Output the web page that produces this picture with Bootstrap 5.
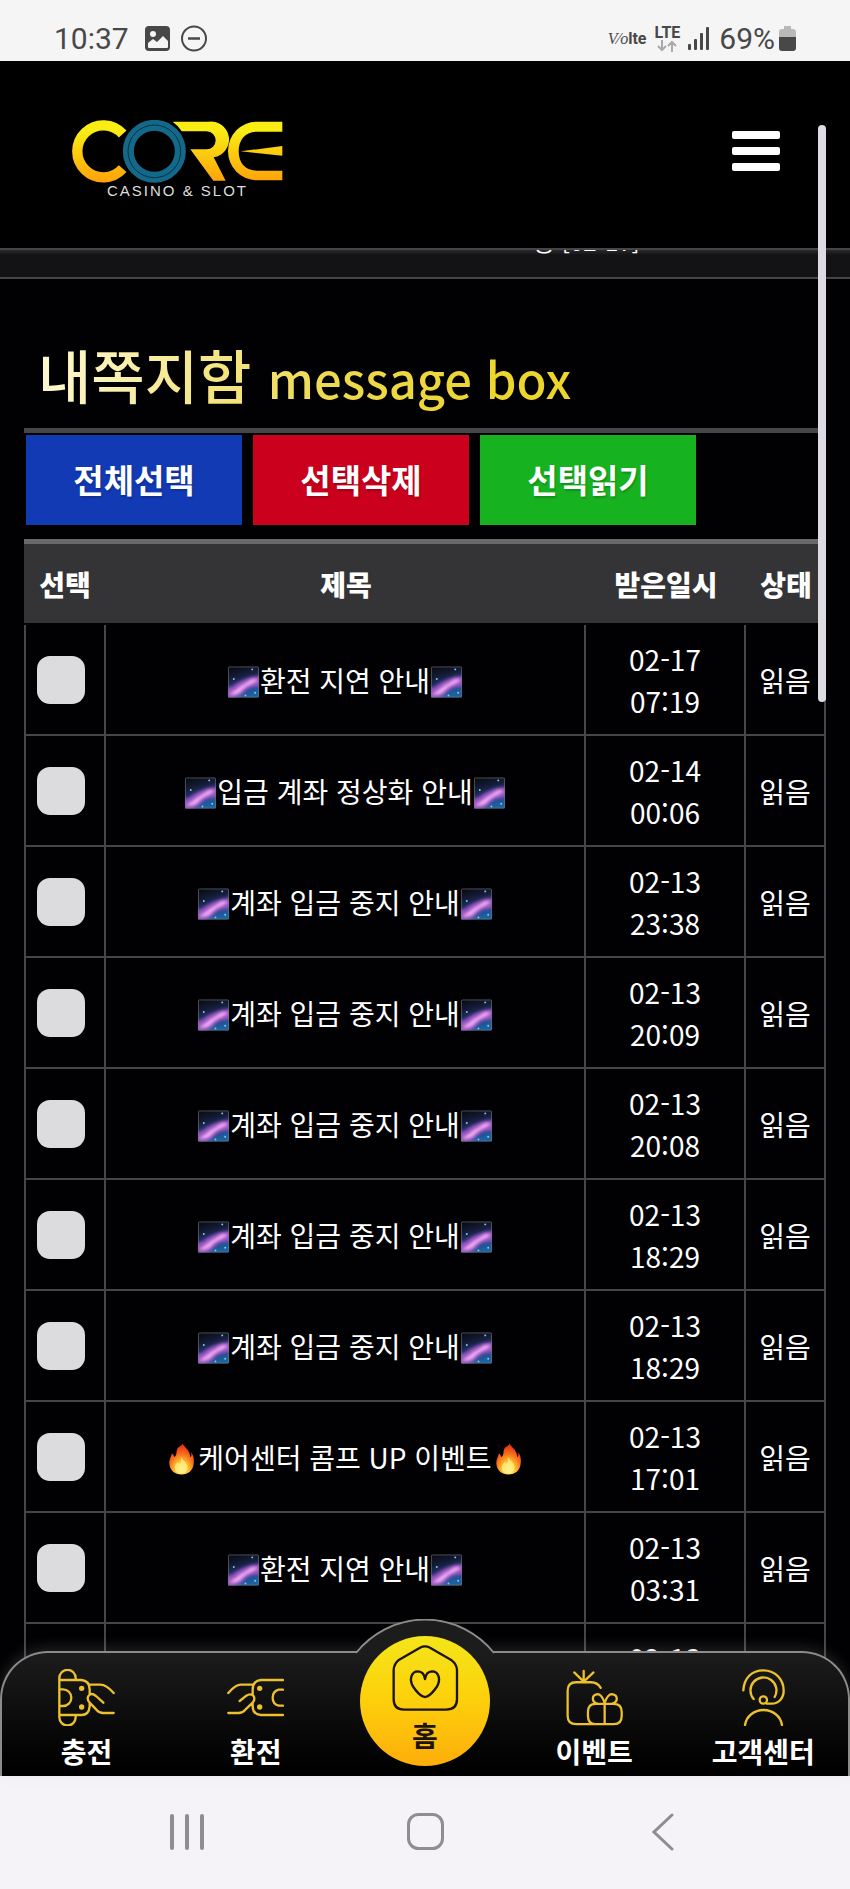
<!DOCTYPE html>
<html lang="ko">
<head>
<meta charset="utf-8">
<meta name="viewport" content="width=device-width, initial-scale=1">
<title>내쪽지함</title>
<link href="https://cdn.jsdelivr.net/npm/bootstrap@5.3.0/dist/css/bootstrap.min.css" rel="stylesheet">
<style>
  :root { --line: #464648; --ink: #010104; }
  body { background: var(--ink); color: #fff; font-family: "Noto Sans CJK KR", sans-serif; font-size: 28px; line-height: 42px; }
  .shell { height: 100vh; }
  .statusbar { height: 61px; padding: 16px 54px 0 54px; background: #f5f5f5; color: #484848; font-family: Roboto, sans-serif; font-size: 30px; line-height: 44px; }
  .net-type { font-size: 16px; line-height: 14px; }
  .volte { font-size: 16px; line-height: 20px; }
  .volte i { font-family: "Liberation Serif", serif; }
  .topbar { height: 189px; padding: 2px 70px 0 72px; background: #000; border-bottom: 2px solid var(--line); }
  .brand-logo { width: 211px; padding-top: 8px; }
  .tagline { font-family: "Liberation Sans", sans-serif; font-size: 15px; line-height: 16px; letter-spacing: 2px; color: #ddd; }
  .menu-btn { width: 48px; padding-bottom: 10px !important; }
  .menu-btn span { height: 8px; border-radius: 2px; background: #fff; }
  .ticker { height: 29px; background: linear-gradient(#2a2a2d, #131316 5px); border-bottom: 2px solid var(--line); font-size: 24px; line-height: 24px; padding-left: 533px; }
  .ticker p { margin-top: -21px; }
  .content-pad { padding: 0 24px; }
  .page-title { height: 154px; padding: 44px 14px 0; border-bottom: 5px solid var(--line); }
  .page-title h1 { font-size: 58px; line-height: 80px; font-weight: 500; background: linear-gradient(100deg, #fff9d4, #eed950 38%, #ecd52c 60%, #ecd52c); -webkit-background-clip: text; background-clip: text; color: transparent; }
  .page-title small { font-size: 49px; font-weight: 500; }
  .actions { padding: 2px; gap: 11px; margin-bottom: 12px; }
  .act { width: 216px; height: 90px; border: 0; border-radius: 0; color: #fff; font-size: 33px; font-weight: 700; text-shadow: 1px 2px 2px rgba(0,0,0,.2); }
  .act-all { background: #133ab5; }
  .act-del { background: #cb001d; }
  .act-read { background: #17b21f; }
  .inbox { --bs-table-bg: transparent; --bs-table-color: #fff; table-layout: fixed; border-collapse: separate; border-spacing: 0; color: #fff; }
  .inbox > thead > tr > th { height: 86px; padding: 0; vertical-align: middle; background: #343436; border-top: 5px solid #69696b; border-bottom: 2px solid #000; font-weight: 900; }
  .inbox > tbody > tr > td { height: 111px; padding: 0; border: 0 solid var(--line); border-width: 0 2px 2px 0; }
  .inbox > tbody > tr > td:first-child { border-left-width: 2px; }
  .c-pick { width: 82px; } .c-date { width: 160px; } .c-state { width: 80px; }
  .form-check-input.pick { width: 48px; height: 48px; margin: 0 8px 0 0; border: 0; border-radius: 13px; background-color: #dcdcdf; vertical-align: middle; }
  .emo { width: 33px; height: 34px; vertical-align: -7px; }
  .inbox a { color: #fff; text-decoration: none; }
  .thumb { right: 24px; top: 125px; width: 8px; height: 577px; border-radius: 4px; background: #dedce2; z-index: 5; }
  .dock { z-index: 6; }
  .tabs { height: 125px; border: 2px solid #8b8b89; border-bottom: 0; border-radius: 48px 48px 0 0; background: linear-gradient(#1c1c1d, #050505 75%, #000); box-shadow: 0 -4px 14px rgba(150,150,150,.22); }
  .tabs > a, .tabs > .gap-slot { flex: 0 0 20%; }
  .tabs a { color: #fff; text-decoration: none; font-weight: 700; line-height: 40px; padding-top: 16px; }
  .tabs > a > svg { width: 57px; height: 57px; margin-bottom: 5px; }
  .g-line { fill: none; stroke: #ecc02e; stroke-width: 7; stroke-linecap: round; stroke-linejoin: round; }
  .g-dot { fill: #ecc02e; stroke: none; }
  .bump { width: 142px; height: 36px; top: -34px; left: 50%; margin-left: -71px; }
  .tabs .home { width: 130px; height: 130px; left: 50%; margin-left: -65px; top: -17px; padding: 7px 0 0; border-radius: 50%; background: linear-gradient(#f3e61a, #fdd20c 45%, #fdae0a); color: #1c1408; line-height: 36px; }
  .tabs .home svg { width: 70px; height: 70px; }
  .sysbar { height: 113px; padding-bottom: 2px; background: #f5f3f7; }
  .sysbar button { width: 28%; }
</style>
</head>
<body>
<svg width="0" height="0" class="position-absolute" aria-hidden="true">
  <defs>
    <linearGradient id="sky" x1="0" y1="0" x2="0.3" y2="1"><stop offset="0" stop-color="#07080b"/><stop offset=".35" stop-color="#131a33"/><stop offset=".7" stop-color="#263a7c"/><stop offset="1" stop-color="#1b62a0"/></linearGradient>
    <radialGradient id="flame" cx=".5" cy=".85" r=".85"><stop offset="0" stop-color="#fff6a0"/><stop offset=".3" stop-color="#ffc62e"/><stop offset=".6" stop-color="#f9701d"/><stop offset="1" stop-color="#e02412"/></radialGradient>
    <filter id="soft"><feGaussianBlur stdDeviation="1.6"/></filter>
    <clipPath id="tile"><rect x="1" y="1" width="32" height="32" rx="1"/></clipPath>
    <symbol id="galaxy" viewBox="0 0 34 34">
      <g clip-path="url(#tile)">
        <rect width="34" height="34" fill="url(#sky)"/>
        <path d="M-3 23Q4 24 9 19Q14 16 19 14Q27 10 37 11V20Q30 22 24 23Q19 25 16 29Q10 35-3 37Z" fill="#9a52c2" filter="url(#soft)"/>
        <path d="M2 30Q9 25 14 21Q20 18 24 15Q28 13 32 15Q27 19 21 21Q16 24 13 28Q8 31 2 30Z" fill="#f0aef2" filter="url(#soft)"/>
        <g fill="#8fc4ee"><circle cx="7" cy="14" r="1"/><circle cx="29" cy="28" r="1"/><circle cx="19" cy="31" r="1"/><circle cx="26" cy="4" r="1"/></g>
      </g>
      <rect x="1.500" y="1.500" width="31" height="31" rx="1" fill="none" stroke="#777" stroke-opacity=".6"/>
    </symbol>
    <symbol id="fire" viewBox="0 0 34 34">
      <path d="M18 1C20 5 26 8 26 15C28 14 27 11 27 10C30 14 30 18 29.500 22C29 29 24 33 17 33C10 33 5 29 4.500 22C4 17 7 14 7 11C9 12 9 14 9.500 15C13 13 11 9 13 6C14 4 17 4 18 1Z" fill="url(#flame)"/>
      <path d="M17 15C18 19 23 20 23 26C23 30 20 32 17 32C13 32 10 30 10 26C10 23 12 22 13 20C14 21 14 22 15 22C17 20 16 17 17 15Z" fill="#fff08a" fill-opacity=".75"/>
    </symbol>
  </defs>
</svg>

<div class="shell position-relative d-flex flex-column overflow-hidden">
  <div class="statusbar d-flex align-items-center justify-content-between flex-shrink-0">
    <div class="d-flex align-items-center">
      <span>10:37</span>
      <svg class="ms-3" width="25" height="25" viewBox="0 0 25 25"><rect width="25" height="25" rx="4" fill="#484848"/><circle cx="8" cy="8" r="3" fill="#f5f5f5"/><path d="M3 17l5-4 4 3 6-6 5 5v6q0 1-1 1H4q-1 0-1-1z" fill="#f5f5f5"/></svg>
      <svg class="ms-2" width="34" height="27" viewBox="0 0 34 27" fill="none" stroke="#484848" stroke-width="2"><circle cx="16" cy="13.500" r="12"/><path d="M10 13.500h12" stroke-width="2.500"/></svg>
    </div>
    <div class="d-flex align-items-center">
      <span class="volte me-2"><i>V⁄o</i><b>lte</b></span>
      <span class="net-type fw-bold d-flex flex-column align-items-center me-2">LTE
        <svg width="20" height="12" viewBox="0 0 20 12" fill="none" stroke="#aaa" stroke-width="2"><path d="M5 0v10M1 6l4 4 4-4M15 12V2M11 6l4-4 4 4"/></svg></span>
      <svg class="me-2" width="23" height="24" viewBox="0 0 23 24" fill="#484848"><rect x="0" y="17" width="3" height="6" rx="1"/><rect x="6" y="12" width="3" height="11" rx="1"/><rect x="12" y="6" width="3" height="17" rx="1"/><rect x="18" y="0" width="3" height="23" rx="1"/></svg>
      <span class="me-1">69%</span>
      <svg width="17" height="25" viewBox="0 0 17 25"><path d="M5 0h7v3h2q3 0 3 3v6H0V6q0-3 3-3h2z" fill="#b9b9b9"/><path d="M0 11h17v11q0 3-3 3H3q-3 0-3-3z" fill="#484848"/></svg>
    </div>
  </div>

  <header class="topbar d-flex align-items-center justify-content-between flex-shrink-0">
    <a href="#" class="brand-logo text-decoration-none d-block text-center" aria-label="CORE CASINO &amp; SLOT">
      <svg class="d-block" width="211" height="63" viewBox="216 362 633 189">
        <defs><linearGradient id="gold" gradientUnits="userSpaceOnUse" x1="0" y1="365" x2="0" y2="548"><stop offset=".15" stop-color="#f9ed14"/><stop offset="1" stop-color="#ffa20a"/></linearGradient></defs>
        <path d="M368 404A78 78 0 1 0 368 508" fill="none" stroke="url(#gold)" stroke-width="31"/>
        <circle cx="463" cy="456" r="78" fill="#000" stroke="#13698a" stroke-width="33"/>
        <circle cx="463" cy="456" r="79" fill="none" stroke="#04303f" stroke-width="3"/>
        <path d="M518 367H625A54 54 0 0 1 641 474L677 544H640L571 450H620A27 27 0 0 0 620 396H545Q534 378 518 367Z" fill="url(#gold)"/>
        <path d="M847 367H770A86 88 0 0 0 770 543H847V514H770C735 514 716 490 716 456S735 397 770 397H847Z" fill="url(#gold)"/>
        <path d="M722 456L847 440V469Z" fill="url(#gold)"/>
      </svg>
      <span class="tagline d-block">CASINO &amp; SLOT</span>
    </a>
    <button class="menu-btn btn p-0 border-0 d-flex flex-column gap-2" type="button" aria-label="메뉴"><span class="w-100"></span><span class="w-100"></span><span class="w-100"></span></button>
  </header>

  <div class="ticker overflow-hidden flex-shrink-0"><p>중 [02-17]</p></div>

  <main class="content-pad">
    <div class="page-title d-flex align-items-center"><h1 class="mb-0 w-100">내쪽지함 <small>message box</small></h1></div>
    <div class="actions d-flex">
      <button type="button" class="btn act act-all">전체선택</button>
      <button type="button" class="btn act act-del">선택삭제</button>
      <button type="button" class="btn act act-read">선택읽기</button>
    </div>
    <table class="table inbox align-middle text-center mb-0">
      <thead><tr><th class="c-pick">선택</th><th>제목</th><th class="c-date">받은일시</th><th class="c-state">상태</th></tr></thead>
      <tbody>
        <tr><td><input class="form-check-input pick" type="checkbox" aria-label="쪽지 선택"></td><td><a href="#"><svg class="emo"><use href="#galaxy"/></svg>환전 지연 안내<svg class="emo"><use href="#galaxy"/></svg></a></td><td>02-17<br>07:19</td><td>읽음</td></tr>
        <tr><td><input class="form-check-input pick" type="checkbox" aria-label="쪽지 선택"></td><td><a href="#"><svg class="emo"><use href="#galaxy"/></svg>입금 계좌 정상화 안내<svg class="emo"><use href="#galaxy"/></svg></a></td><td>02-14<br>00:06</td><td>읽음</td></tr>
        <tr><td><input class="form-check-input pick" type="checkbox" aria-label="쪽지 선택"></td><td><a href="#"><svg class="emo"><use href="#galaxy"/></svg>계좌 입금 중지 안내<svg class="emo"><use href="#galaxy"/></svg></a></td><td>02-13<br>23:38</td><td>읽음</td></tr>
        <tr><td><input class="form-check-input pick" type="checkbox" aria-label="쪽지 선택"></td><td><a href="#"><svg class="emo"><use href="#galaxy"/></svg>계좌 입금 중지 안내<svg class="emo"><use href="#galaxy"/></svg></a></td><td>02-13<br>20:09</td><td>읽음</td></tr>
        <tr><td><input class="form-check-input pick" type="checkbox" aria-label="쪽지 선택"></td><td><a href="#"><svg class="emo"><use href="#galaxy"/></svg>계좌 입금 중지 안내<svg class="emo"><use href="#galaxy"/></svg></a></td><td>02-13<br>20:08</td><td>읽음</td></tr>
        <tr><td><input class="form-check-input pick" type="checkbox" aria-label="쪽지 선택"></td><td><a href="#"><svg class="emo"><use href="#galaxy"/></svg>계좌 입금 중지 안내<svg class="emo"><use href="#galaxy"/></svg></a></td><td>02-13<br>18:29</td><td>읽음</td></tr>
        <tr><td><input class="form-check-input pick" type="checkbox" aria-label="쪽지 선택"></td><td><a href="#"><svg class="emo"><use href="#galaxy"/></svg>계좌 입금 중지 안내<svg class="emo"><use href="#galaxy"/></svg></a></td><td>02-13<br>18:29</td><td>읽음</td></tr>
        <tr><td><input class="form-check-input pick" type="checkbox" aria-label="쪽지 선택"></td><td><a href="#"><svg class="emo"><use href="#fire"/></svg>케어센터 콤프 UP 이벤트<svg class="emo"><use href="#fire"/></svg></a></td><td>02-13<br>17:01</td><td>읽음</td></tr>
        <tr><td><input class="form-check-input pick" type="checkbox" aria-label="쪽지 선택"></td><td><a href="#"><svg class="emo"><use href="#galaxy"/></svg>환전 지연 안내<svg class="emo"><use href="#galaxy"/></svg></a></td><td>02-13<br>03:31</td><td>읽음</td></tr>
        <tr><td></td><td></td><td>02-13<br>&nbsp;</td><td></td></tr>
      </tbody>
    </table>
  </main>

  <div class="thumb position-absolute"></div>

  <div class="dock position-absolute bottom-0 start-0 end-0">
    <nav class="tabs position-relative d-flex">
      <a href="#" class="d-flex flex-column align-items-center">
        <svg viewBox="170 203 171 171"><g class="g-line"><path d="M174 230A24 24 0 0 1 223 230V236M174 230V348A24 24 0 0 0 223 348V342M174 236H240Q265 238 265 265V278M265 304V315Q263 341 240 341H174M174 264H185A25 25 0 0 1 185 314H174M265 250H297Q315 250 337 275M306 304L284 284Q270 273 262 283Q255 293 265 304L285 325Q294 335 305 335H337"/></g><circle class="g-dot" cx="241" cy="261" r="8"/><circle class="g-dot" cx="241" cy="317" r="8"/></svg>충전</a>
      <a href="#" class="d-flex flex-column align-items-center">
        <svg viewBox="680 203 171 171"><g class="g-line"><path d="M684 275Q705 250 722 250H757M848 236H782Q757 238 757 265V280M848 341H782Q757 339 757 315V306M718 299L738 283Q750 275 759 283Q766 293 757 304L735 325Q726 335 715 335H684M848 265H835A25 25 0 0 0 835 313H848"/></g><circle class="g-dot" cx="778" cy="261" r="8"/><circle class="g-dot" cx="778" cy="317" r="8"/></svg>환전</a>
      <span class="gap-slot"></span>
      <a href="#" class="d-flex flex-column align-items-center">
        <svg viewBox="424 203 174 171"><g class="g-line"><path d="M530 259Q520 242 500 242H455Q429 242 429 268V345Q429 370 455 370H570Q594 370 594 345V333Q594 308 570 308H514Q491 308 491 333V345Q491 370 514 370M542 308V370M478 240V207M478 240L449 212M478 240L508 212M542 305Q533 278 520 278Q506 280 506 292Q506 303 520 307M542 305Q551 278 564 278Q579 280 579 292Q579 303 565 307"/></g></svg>이벤트</a>
      <a href="#" class="d-flex flex-column align-items-center">
        <svg viewBox="935 203 171 171"><g class="g-line"><path d="M960 267C962 230 985 207 1020 207C1058 207 1081 236 1081 268C1081 290 1066 307 1045 307H1031M991 293A39 39 0 1 1 1054 287M965 371A56 52 0 0 1 1076 371"/><circle cx="1020" cy="296" r="11"/></g></svg>고객센터</a>
      <svg class="bump position-absolute" viewBox="0 0 142 36"><path d="M3 36V33A88 88 0 0 1 139 33V36Z" fill="#1d1c1d"/><path d="M2 34A88 88 0 0 1 140 34" fill="none" stroke="#8b8b89" stroke-width="2"/></svg>
      <a href="#" class="home position-absolute d-flex flex-column align-items-center">
        <svg class="mb-1" viewBox="1170 126 210 210"><g fill="none" stroke="#1c1408" stroke-width="7" stroke-linejoin="round"><path d="M1260 140Q1275 132 1290 140L1355 178Q1371 190 1371 208V295Q1371 326 1338 326H1212Q1181 326 1181 295V208Q1181 190 1195 178Z"/><path d="M1275 234Q1272 212 1254 211C1234 211 1226 236 1240 258Q1255 280 1268 286Q1275 290 1282 286Q1295 280 1310 258C1324 236 1316 211 1296 211Q1278 212 1275 234Z"/></g></svg>홈</a>
    </nav>
    <div class="sysbar d-flex align-items-center justify-content-center">
      <button type="button" class="btn border-0 p-0" aria-label="최근 앱"><svg width="34" height="36" viewBox="0 0 34 36" fill="#8e8d90"><rect width="4" height="36" rx="2"/><rect x="15" width="4" height="36" rx="2"/><rect x="30" width="4" height="36" rx="2"/></svg></button>
      <button type="button" class="btn border-0 p-0" aria-label="홈 화면"><svg width="37" height="37" viewBox="0 0 37 37"><rect x="1.500" y="1.500" width="34" height="34" rx="10" fill="none" stroke="#8e8d90" stroke-width="3"/></svg></button>
      <button type="button" class="btn border-0 p-0" aria-label="뒤로"><svg width="22" height="38" viewBox="0 0 22 38" fill="none" stroke="#8e8d90" stroke-width="3" stroke-linecap="round"><path d="M20 2L2 19L20 36"/></svg></button>
    </div>
  </div>
</div>
<script src="https://cdn.jsdelivr.net/npm/bootstrap@5.3.0/dist/js/bootstrap.bundle.min.js"></script>
</body>
</html>
